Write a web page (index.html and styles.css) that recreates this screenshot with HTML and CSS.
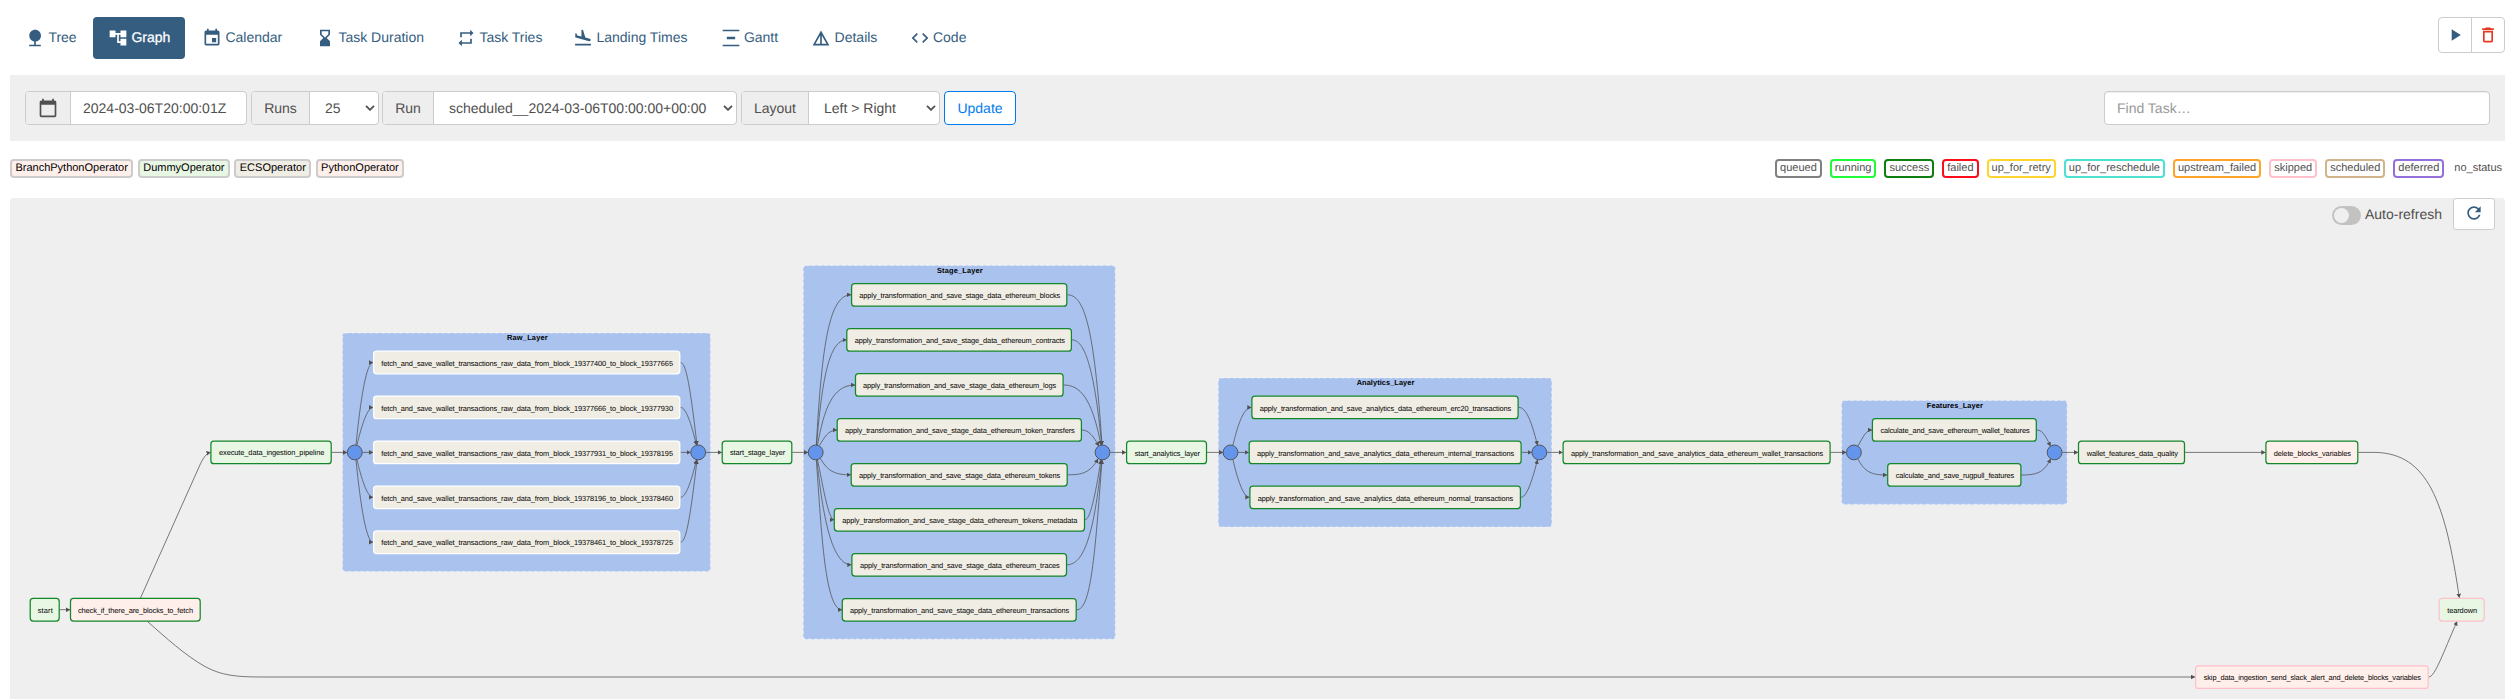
FILE: index.html
```html
<!DOCTYPE html>
<html lang="en">
<head>
<meta charset="utf-8">
<title>Graph</title>
<link rel="stylesheet" href="styles.css">
</head>
<body>
<header class="top">
  <nav class="pills">
    <a class="pill"><svg viewBox="0 0 24 24"><path d="M13 16.12c3.47-.41 6.17-3.36 6.17-6.95 0-3.87-3.13-7-7-7s-7 3.13-7 7c0 3.47 2.52 6.34 5.83 6.89V20H5v2h14v-2h-6v-3.88z"/></svg>Tree</a>
    <a class="pill active"><svg viewBox="0 0 24 24"><path d="M22 11V3h-7v3H9V3H2v8h7V8h2v10h4v3h7v-8h-7v3h-2V8h2v3z"/></svg>Graph</a>
    <a class="pill"><svg viewBox="0 0 24 24"><path d="M17 12h-5v5h5v-5zM16 1v2H8V1H6v2H5c-1.11 0-1.99.9-1.99 2L3 19c0 1.1.89 2 2 2h14c1.1 0 2-.9 2-2V5c0-1.1-.9-2-2-2h-1V1h-2zm3 18H5V8h14v11z"/></svg>Calendar</a>
    <a class="pill"><svg viewBox="0 0 24 24"><path d="M18 22l-.01-6L14 12l3.99-4.01L18 2H6v6l4 4-4 3.99V22h12zM8 7.5V4h8v3.5l-4 4-4-4z"/></svg>Task Duration</a>
    <a class="pill"><svg viewBox="0 0 24 24"><path d="M7 7h10v3l4-4-4-4v3H5v6h2V7zm10 10H7v-3l-4 4 4 4v-3h12v-6h-2v4z"/></svg>Task Tries</a>
    <a class="pill"><svg viewBox="0 0 24 24"><path d="M2.5 19h19v2h-19zm7.18-5.73l4.35 1.16 5.31 1.42c.8.21 1.62-.26 1.84-1.06.21-.8-.26-1.62-1.06-1.84l-5.31-1.42-2.76-9.02L10.12 2v8.28L5.15 8.95l-.93-2.32-1.45-.39v5.17l1.6.43 5.31 1.43z"/></svg>Landing Times</a>
    <a class="pill"><svg viewBox="0 0 24 24"><path d="M22 2v2H2V2h20zM7 10.5v3h10v-3H7zM2 20v2h20v-2H2z"/></svg>Gantt</a>
    <a class="pill"><svg viewBox="0 0 24 24"><path d="M12 3L2 21h20L12 3zm1 5.92L18.6 19H13V8.92zm-2 0V19H5.4L11 8.92z"/></svg>Details</a>
    <a class="pill"><svg viewBox="0 0 24 24"><path d="M9.4 16.6L4.8 12l4.6-4.6L8 6l-6 6 6 6 1.4-1.4zm5.2 0l4.6-4.6-4.6-4.6L16 6l6 6-6 6-1.4-1.4z"/></svg>Code</a>
  </nav>
  <div class="actions">
    <button class="act"><svg viewBox="0 0 24 24"><path d="M8 5v14l11-7z"/></svg></button>
    <button class="act danger"><svg viewBox="0 0 24 24"><path d="M6 19c0 1.1.9 2 2 2h8c1.1 0 2-.9 2-2V7H6v12zM8 9h8v10H8V9zm7.5-5l-1-1h-5l-1 1H5v2h14V4z"/></svg></button>
  </div>
</header>

<form class="filters">
  <div class="group date"><span class="addon"><svg viewBox="0 0 24 24"><path d="M20 3h-1V1h-2v2H7V1H5v2H4c-1.1 0-2 .9-2 2v16c0 1.1.9 2 2 2h16c1.1 0 2-.9 2-2V5c0-1.1-.9-2-2-2zm0 18H4V8h16v13z"/></svg></span><span class="field">2024-03-06T20:00:01Z</span></div>
  <div class="group runs"><span class="addon">Runs</span><span class="field select">25<svg class="chev" viewBox="0 0 10 6"><path d="M1 .8l4 4 4-4"/></svg></span></div>
  <div class="group run"><span class="addon">Run</span><span class="field select">scheduled__2024-03-06T00:00:00+00:00<svg class="chev" viewBox="0 0 10 6"><path d="M1 .8l4 4 4-4"/></svg></span></div>
  <div class="group layout"><span class="addon">Layout</span><span class="field select">Left &gt; Right<svg class="chev" viewBox="0 0 10 6"><path d="M1 .8l4 4 4-4"/></svg></span></div>
  <button class="update" type="button">Update</button>
  <input class="find" type="text" placeholder="Find Task…">
</form>

<div class="legend">
  <div class="operators">
    <span class="tag python">BranchPythonOperator</span>
    <span class="tag dummy">DummyOperator</span>
    <span class="tag ecs">ECSOperator</span>
    <span class="tag python">PythonOperator</span>
  </div>
  <div class="states">
    <span class="tag queued">queued</span>
    <span class="tag running">running</span>
    <span class="tag success">success</span>
    <span class="tag failed">failed</span>
    <span class="tag retry">up_for_retry</span>
    <span class="tag reschedule">up_for_reschedule</span>
    <span class="tag upstream">upstream_failed</span>
    <span class="tag skipped">skipped</span>
    <span class="tag scheduled">scheduled</span>
    <span class="tag deferred">deferred</span>
    <span class="tag none">no_status</span>
  </div>
</div>

<main class="panel">
  <svg class="graph" viewBox="10 198 2495 501">
    <defs>
      <marker id="arrow" markerUnits="userSpaceOnUse" markerWidth="5" markerHeight="5" refX="4" refY="2.3" orient="auto"><path d="M0 0L4.2 2.3L0 4.6z"/></marker>
    </defs>
    <g class="cluster">
      <rect x="342.5" y="333" width="368" height="238.5" rx="3"/>
      <rect x="803.3" y="265.4" width="312" height="373.8" rx="3"/>
      <rect x="1218.3" y="378" width="333.5" height="149" rx="3"/>
      <rect x="1841.6" y="400.4" width="225.5" height="104" rx="3"/>
    </g>
    <g class="title">
      <text x="507" y="340" textLength="40.7">Raw_Layer</text>
      <text x="937" y="273" textLength="45.7">Stage_Layer</text>
      <text x="1356.7" y="385" textLength="57.6">Analytics_Layer</text>
      <text x="1926.8" y="408" textLength="56.1">Features_Layer</text>
    </g>
    <g class="edge">
      <path d="M59.7 609.7H70"/>
      <path d="M140.5 598L199 467C203 458 206 453.5 210.5 452.4"/>
      <path d="M147.5 621.5C165 637 186 656 205 666.5C222 675.5 235 677 265 677H2195"/>
      <path d="M331.7 452.4H347"/>
      <path d="M356 445C359 415 365 362.5 373 362.5"/>
      <path d="M357 445C361 428 367 407.4 373 407.4"/>
      <path d="M362.5 452.4H373"/>
      <path d="M357 460C361 477 367 497.3 373 497.3"/>
      <path d="M356 460C359 490 365 542.2 373 542.2"/>
      <path d="M680.5 362.5C686 362.5 690 385 697 445"/>
      <path d="M680.5 407.4C686 407.4 691 423 696.5 445"/>
      <path d="M680.5 452.4H690.5"/>
      <path d="M680.5 497.3C686 497.3 691 482 696.5 460"/>
      <path d="M680.5 542.2C686 542.2 690 520 697 460"/>
      <path d="M706 452.4H721.7"/>
      <path d="M792.3 452.4H808"/>
      <path d="M816.3 445C822 345 829 294.8 851 294.8"/>
      <path d="M816.6 445C822 380 829 339.9 846.5 339.9"/>
      <path d="M817.5 445C824 410 832 385 855 385"/>
      <path d="M819.5 445.5C824 438 828 430 837 430"/>
      <path d="M820.5 458.5C828 472 836 474.8 850.7 474.8"/>
      <path d="M817.5 460C822 480 828 519.8 834 519.8"/>
      <path d="M816.8 460C821 495 828 564.8 851.3 564.8"/>
      <path d="M816.3 460C821 520 824 609.8 842 609.8"/>
      <path d="M1067.3 294.8C1084 294.8 1094 325 1102 445"/>
      <path d="M1072 339.9C1084 339.9 1094 365 1101.7 445"/>
      <path d="M1063.7 385C1080 385 1092 398 1101 445"/>
      <path d="M1082 430C1089 430 1094 437 1098.8 446"/>
      <path d="M1067.7 474.8C1082 474.8 1090 473 1098 459"/>
      <path d="M1085 519.8C1090 519.8 1095 497 1101 460"/>
      <path d="M1067 564.8C1086 564.8 1095 525 1101.7 460"/>
      <path d="M1076.7 609.8C1091 609.8 1095 555 1102 460"/>
      <path d="M1110.3 452.4H1126"/>
      <path d="M1207 452.4H1223"/>
      <path d="M1233 445C1237 428 1243 407.4 1251.3 407.4"/>
      <path d="M1238 452.4H1248.7"/>
      <path d="M1233 460C1237 477 1243 497.3 1249.3 497.3"/>
      <path d="M1518.7 407.4C1526 407.4 1531 420 1537.5 445"/>
      <path d="M1521.7 452.4H1531.7"/>
      <path d="M1521 497.3C1526 497.3 1531 485 1537.5 460"/>
      <path d="M1547 452.4H1562.5"/>
      <path d="M1830.7 452.4H1846.2"/>
      <path d="M1858 446C1863 437 1866 430 1872 430"/>
      <path d="M1858 459C1865 473 1873 475 1887 475"/>
      <path d="M2036.8 430C2043 430 2046 437 2050.5 446"/>
      <path d="M2021.4 475C2036 475 2044 473 2050.5 459"/>
      <path d="M2062.3 452.4H2078"/>
      <path d="M2185 452.4H2265.3"/>
      <path d="M2358.3 452.4H2376C2427 454 2445 500 2459.3 597.7"/>
      <path d="M2428.7 677C2435 677 2443 653 2457 621.5"/>
    </g>
    <g class="join">
      <circle cx="354.8" cy="452.4" r="7.4"/><circle cx="698.2" cy="452.4" r="7.4"/>
      <circle cx="815.7" cy="452.4" r="7.4"/><circle cx="1102.5" cy="452.4" r="7.4"/>
      <circle cx="1230.5" cy="452.4" r="7.4"/><circle cx="1539.3" cy="452.4" r="7.4"/>
      <circle cx="1853.9" cy="452.4" r="7.4"/><circle cx="2054.6" cy="452.4" r="7.4"/>
    </g>
    <g class="node dummy">
      <rect x="30.2" y="598.4" width="29" height="22.6" rx="3"/><text x="37.7" y="612.7" textLength="15">start</text>
      <rect x="210.9" y="441.1" width="120.3" height="22.6" rx="3"/><text x="219" y="455" textLength="105.3">execute_data_ingestion_pipeline</text>
      <rect x="722.2" y="441.1" width="69.6" height="22.6" rx="3"/><text x="730" y="455" textLength="55.3">start_stage_layer</text>
      <rect x="1126.6" y="441.1" width="79.9" height="22.6" rx="3"/><text x="1134.7" y="455.7" textLength="65.3">start_analytics_layer</text>
    </g>
    <g class="node python">
      <rect x="70.5" y="598.4" width="129.7" height="22.6" rx="3"/><text x="78" y="612.7" textLength="115">check_if_there_are_blocks_to_fetch</text>
      <rect x="2265.9" y="441.1" width="91.9" height="22.6" rx="3"/><text x="2273.7" y="455.7" textLength="77.3">delete_blocks_variables</text>
    </g>
    <g class="node ecs pending">
      <rect x="373.6" y="351.2" width="306.2" height="22.6" rx="3"/><text x="381.3" y="366" textLength="291.7">fetch_and_save_wallet_transactions_raw_data_from_block_19377400_to_block_19377665</text>
      <rect x="373.6" y="396.1" width="306.2" height="22.6" rx="3"/><text x="381.3" y="411" textLength="291.7">fetch_and_save_wallet_transactions_raw_data_from_block_19377666_to_block_19377930</text>
      <rect x="373.6" y="441.1" width="306.2" height="22.6" rx="3"/><text x="381.3" y="456" textLength="291.7">fetch_and_save_wallet_transactions_raw_data_from_block_19377931_to_block_19378195</text>
      <rect x="373.6" y="486" width="306.2" height="22.6" rx="3"/><text x="381.3" y="501" textLength="291.7">fetch_and_save_wallet_transactions_raw_data_from_block_19378196_to_block_19378460</text>
      <rect x="373.6" y="530.9" width="306.2" height="22.6" rx="3"/><text x="381.3" y="545" textLength="291.7">fetch_and_save_wallet_transactions_raw_data_from_block_19378461_to_block_19378725</text>
    </g>
    <g class="node ecs">
      <rect x="851.6" y="283.6" width="215.2" height="22.6" rx="3"/><text x="859.3" y="298" textLength="201">apply_transformation_and_save_stage_data_ethereum_blocks</text>
      <rect x="846.8" y="328.6" width="224.6" height="22.6" rx="3"/><text x="854.7" y="343" textLength="210.3">apply_transformation_and_save_stage_data_ethereum_contracts</text>
      <rect x="855.5" y="373.6" width="207.6" height="22.6" rx="3"/><text x="863" y="388" textLength="193.3">apply_transformation_and_save_stage_data_ethereum_logs</text>
      <rect x="837.2" y="418.6" width="244.2" height="22.6" rx="3"/><text x="845" y="433" textLength="229.7">apply_transformation_and_save_stage_data_ethereum_token_transfers</text>
      <rect x="851.2" y="463.5" width="216" height="22.6" rx="3"/><text x="859" y="478" textLength="201.3">apply_transformation_and_save_stage_data_ethereum_tokens</text>
      <rect x="834.3" y="508.5" width="250.2" height="22.6" rx="3"/><text x="842.3" y="523" textLength="235">apply_transformation_and_save_stage_data_ethereum_tokens_metadata</text>
      <rect x="851.9" y="553.5" width="214.6" height="22.6" rx="3"/><text x="860" y="568" textLength="199.7">apply_transformation_and_save_stage_data_ethereum_traces</text>
      <rect x="842.3" y="598.5" width="233.9" height="22.6" rx="3"/><text x="850" y="613" textLength="219.3">apply_transformation_and_save_stage_data_ethereum_transactions</text>
      <rect x="1251.9" y="396.1" width="266.2" height="22.6" rx="3"/><text x="1259.7" y="411" textLength="251.6">apply_transformation_and_save_analytics_data_ethereum_erc20_transactions</text>
      <rect x="1249.2" y="441.1" width="271.9" height="22.6" rx="3"/><text x="1257" y="456" textLength="257.3">apply_transformation_and_save_analytics_data_ethereum_internal_transactions</text>
      <rect x="1249.9" y="486" width="270.5" height="22.6" rx="3"/><text x="1257.7" y="501" textLength="255.6">apply_transformation_and_save_analytics_data_ethereum_normal_transactions</text>
      <rect x="1563.1" y="441.1" width="267" height="22.6" rx="3"/><text x="1571" y="456" textLength="252.2">apply_transformation_and_save_analytics_data_ethereum_wallet_transactions</text>
      <rect x="1872.4" y="418.6" width="163.9" height="22.6" rx="3"/><text x="1880.4" y="433" textLength="149.2">calculate_and_save_ethereum_wallet_features</text>
      <rect x="1887.7" y="463.6" width="133.2" height="22.6" rx="3"/><text x="1895.7" y="478" textLength="118.6">calculate_and_save_rugpull_features</text>
      <rect x="2078.5" y="441.1" width="106" height="22.6" rx="3"/><text x="2086.7" y="456" textLength="91.3">wallet_features_data_quality</text>
    </g>
    <g class="node skip python">
      <rect x="2195.6" y="665.8" width="232.6" height="22.6" rx="3"/><text x="2203.7" y="680" textLength="217.3">skip_data_ingestion_send_slack_alert_and_delete_blocks_variables</text>
    </g>
    <g class="node skip dummy">
      <rect x="2439.2" y="598.4" width="45" height="22.6" rx="3"/><text x="2447.3" y="613" textLength="29.7">teardown</text>
    </g>
  </svg>
  <div class="controls">
    <span class="toggle"></span>
    <span class="toggle-label">Auto-refresh</span>
    <button class="refresh"><svg viewBox="0 0 24 24"><path d="M17.65 6.35C16.2 4.9 14.21 4 12 4c-4.42 0-7.99 3.58-7.99 8s3.57 8 7.99 8c3.73 0 6.84-2.55 7.73-6h-2.08c-.82 2.33-3.04 4-5.65 4-3.31 0-6-2.69-6-6s2.69-6 6-6c1.66 0 3.14.69 4.22 1.78L13 11h7V4l-2.35 2.35z"/></svg></button>
  </div>
</main>
</body>
</html>
```

FILE: styles.css
```css
* { box-sizing: border-box; }
body {
  margin: 0;
  padding: 17px 13px 0 10px;
  height: 699px;
  display: flex;
  flex-direction: column;
  overflow: hidden;
  background: #fff;
  color: #51504f;
  font: 14px/20px "Liberation Sans", Arial, sans-serif;
  text-rendering: geometricPrecision;
}
button, input { font: inherit; margin: 0; text-rendering: inherit; }
.top { display: flex; justify-content: space-between; align-items: flex-start; height: 58px; }
.pills { display: grid; grid-template-columns: 81px 92px 111px 139px 115px 145.5px 88.7px 96.4px auto; gap: 2px; }
.pill {
  display: flex;
  align-items: center;
  gap: 3.4px;
  height: 42px;
  padding: 0 0 2px 15px;
  border-radius: 4px;
  color: #355d80;
  line-height: 18px;
  white-space: nowrap;
}
.pill svg { position: relative; top: 1px; width: 20px; height: 20px; fill: currentColor; }
.pill.active { background: #355d80; color: #fff; -webkit-text-stroke: .25px #fff; }
.actions { display: flex; }
.act {
  width: 34px;
  height: 36px;
  padding: 0;
  display: flex;
  align-items: center;
  justify-content: center;
  background: #fff;
  border: 1px solid #ccc;
  border-radius: 4px 0 0 4px;
  color: #355d80;
}
.act.danger { margin-left: -1px; border-radius: 0 4px 4px 0; color: #e43921; }
.act svg { width: 20px; height: 20px; fill: currentColor; }

.filters {
  display: flex;
  align-items: center;
  gap: 4px;
  height: 66px;
  padding: 0 15px;
  background: #efefef;
}
.group { display: flex; height: 34px; border: 1px solid #ccc; border-radius: 4px; background: #fff; overflow: hidden; }
.addon { display: flex; align-items: center; justify-content: center; background: #eee; border-right: 1px solid #ccc; }
.addon svg { width: 20px; height: 20px; fill: #51504f; }
.field { flex: 1; display: flex; align-items: center; padding-left: 12px; white-space: nowrap; }
.select { justify-content: space-between; padding: 0 3px 0 15px; }
.chev { width: 10px; height: 6px; fill: none; stroke: #51504f; stroke-width: 1.8; }
.date { width: 222px; }
.date .addon { width: 45px; }
.runs { width: 128px; }
.runs .addon { width: 58px; }
.run { width: 355px; margin-left: -1px; }
.run .addon { width: 51px; }
.layout { width: 199px; }
.layout .addon { width: 67px; }
.update { width: 72px; height: 34px; padding: 0; border: 1px solid #017cee; border-radius: 4px; background: #fff; color: #017cee; }
.find { width: 386px; height: 34px; margin-left: auto; padding: 0 12px; border: 1px solid #ccc; border-radius: 4px; box-shadow: inset 0 1px 1px rgba(0, 0, 0, .075); outline: 0; }
.find::placeholder { color: #999; opacity: 1; }

.legend { display: flex; justify-content: space-between; height: 57px; padding-top: 18px; }
.operators, .states { display: flex; font-size: 11px; line-height: 15px; }
.operators { gap: 4.5px; color: #000; }
.states { gap: 8px; }
.tag { height: 19px; padding: 0 3px; border: 2px solid #ccc; border-radius: 4px; }
.operators .tag { padding: 0 3.4px; }
.tag.python { background: #ffefeb; }
.tag.dummy { background: #e8f7e4; }
.tag.ecs { background: #f0ede4; }
.queued { border-color: gray; }
.running { border-color: #20fa38; }
.success { border-color: #0f7f12; }
.failed { border-color: #fc0d1b; }
.retry { border-color: #fdd530; }
.reschedule { border-color: #4ce1d0; }
.upstream { border-color: #fda429; }
.skipped { border-color: pink; }
.scheduled { border-color: tan; }
.deferred { border-color: mediumpurple; }
.states .none { border-color: transparent; padding: 0 1px 0 0; }

.panel { position: relative; flex: 1; background: #efefef; border-radius: 4px 4px 0 0; }
.controls { position: relative; display: flex; justify-content: flex-end; align-items: flex-start; padding-right: 10px; }
.toggle { width: 29px; height: 19px; margin-top: 8px; padding: 2px; border-radius: 10px; background: #c4c2c1; }
.toggle::before { content: ""; display: block; width: 15px; height: 15px; border-radius: 50%; background: #efefef; }
.toggle-label { margin: 6px 11px 0 4px; }
.refresh { width: 42px; height: 32px; padding: 0 0 2px; display: flex; align-items: center; justify-content: center; border: 1px solid #ccc; border-radius: 3px; background: #fff; }
.refresh svg { width: 20px; height: 20px; fill: #355d80; }

.graph { position: absolute; left: 0; top: 0; width: 2495px; height: 501px; }
.graph text { font-size: 7.4px; fill: #000; }
.graph .title text { font-weight: bold; }
.cluster rect { fill: rgba(100, 149, 237, .5); stroke: rgba(255, 255, 255, .5); stroke-width: 1.2; stroke-dasharray: 3 3; }
.edge path { fill: none; stroke: #51504f; stroke-opacity: .8; stroke-width: .95; marker-end: url(#arrow); }
marker path { fill: #51504f; }
.join circle { fill: cornflowerblue; stroke: #51504f; stroke-width: .95; }
.node rect { stroke: #14872a; stroke-width: 1.25; }
.node.dummy rect { fill: #e8f7e4; }
.node.python rect { fill: #ffefeb; }
.node.ecs rect { fill: #f0ede4; }
.node.pending rect { stroke: #fff; }
.node.skip rect { stroke: pink; }
```
